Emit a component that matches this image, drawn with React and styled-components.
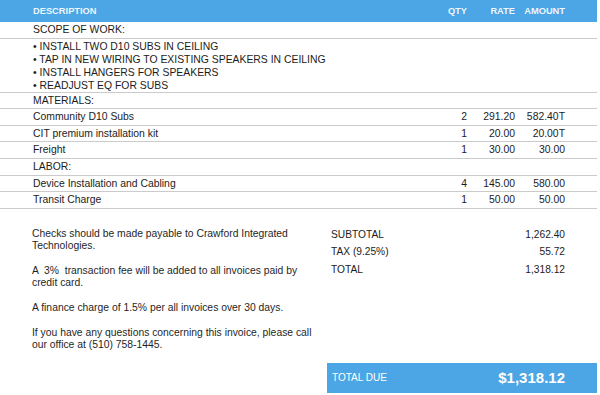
import styled, { createGlobalStyle } from 'styled-components';

const GlobalStyle = createGlobalStyle`
  html, body {
    margin: 0;
    padding: 0;
    background: #fff;
  }
  body {
    font-family: 'Liberation Sans', Arial, Helvetica, sans-serif;
    color: #1c1c1c;
  }
`;

const items = [
  { type: 'section', label: 'SCOPE OF WORK:' },
  {
    type: 'bullets',
    lines: [
      'INSTALL TWO D10 SUBS IN CEILING',
      'TAP IN NEW WIRING TO EXISTING SPEAKERS IN CEILING',
      'INSTALL HANGERS FOR SPEAKERS',
      'READJUST EQ FOR SUBS',
    ],
  },
  { type: 'section', label: 'MATERIALS:' },
  { type: 'item', label: 'Community D10 Subs', qty: '2', rate: '291.20', amount: '582.40T' },
  { type: 'item', label: 'CIT premium installation kit', qty: '1', rate: '20.00', amount: '20.00T' },
  { type: 'item', label: 'Freight', qty: '1', rate: '30.00', amount: '30.00' },
  { type: 'section', label: 'LABOR:' },
  { type: 'item', label: 'Device Installation and Cabling', qty: '4', rate: '145.00', amount: '580.00' },
  { type: 'item', label: 'Transit Charge', qty: '1', rate: '50.00', amount: '50.00' },
];

const totals = [
  { label: 'SUBTOTAL', value: '1,262.40' },
  { label: 'TAX (9.25%)', value: '55.72' },
  { label: 'TOTAL', value: '1,318.12' },
];

const App = () => {
  return (
    <>
      <GlobalStyle />
      <Page>
        <HeaderRow>
          <HeadCell>DESCRIPTION</HeadCell>
          <HeadCell $align='right'>QTY</HeadCell>
          <HeadCell $align='right'>RATE</HeadCell>
          <HeadCell $align='right'>AMOUNT</HeadCell>
        </HeaderRow>

        {items.map((item, index) => {
          if (item.type === 'bullets') {
            return (
              <BulletRow key={index}>
                {item.lines.map((line) => (
                  <Bullet key={line}>• {line}</Bullet>
                ))}
              </BulletRow>
            );
          }
          return (
            <Row key={index}>
              <Cell>{item.label}</Cell>
              <Cell $align='right'>{item.qty}</Cell>
              <Cell $align='right'>{item.rate}</Cell>
              <Cell $align='right'>{item.amount}</Cell>
            </Row>
          );
        })}

        <Footer>
          <Notes>
            <p>Checks should be made payable to Crawford Integrated Technologies.</p>
            <p>A &nbsp;3% &nbsp;transaction fee will be added to all invoices paid by credit card.</p>
            <p>A finance charge of 1.5% per all invoices over 30 days.</p>
            <p>If you have any questions concerning this invoice, please call our office at (510) 758-1445.</p>
          </Notes>
          <Totals>
            {totals.map((t) => (
              <TotalLine key={t.label}>
                <span>{t.label}</span>
                <span>{t.value}</span>
              </TotalLine>
            ))}
          </Totals>
          <DueBar>
            <DueLabel>TOTAL DUE</DueLabel>
            <DueAmount>$1,318.12</DueAmount>
          </DueBar>
        </Footer>
      </Page>
    </>
  );
};

export default App;

const Page = styled.div`
  width: 597px;
  height: 395px;
  overflow: hidden;
`;

// description | qty (ends 467) | rate (ends 515) | amount (ends 565)
const grid = `
  display: grid;
  grid-template-columns: 1fr 40px 48px 50px;
  padding: 0 32px 0 33px;
  align-items: center;
`;

const HeaderRow = styled.div`
  ${grid}
  height: 22px;
  background: #4ca5e4;
`;

const HeadCell = styled.div`
  font-size: 9.3px;
  font-weight: bold;
  color: rgba(255, 255, 255, 0.92);
  text-align: ${(props) => props.$align || 'left'};
  white-space: nowrap;
`;

const Row = styled.div`
  ${grid}
  height: 15.6px;
  border-bottom: 1px solid #cbcbcb;
`;

const Cell = styled.div`
  font-size: 10.4px;
  line-height: 15.6px;
  text-align: ${(props) => props.$align || 'left'};
  white-space: nowrap;
`;

const BulletRow = styled.div`
  padding: 1px 32px 0 33px;
  height: 52px;
  border-bottom: 1px solid #cbcbcb;
`;

const Bullet = styled.div`
  font-size: 10.4px;
  line-height: 13px;
`;

const Footer = styled.div`
  display: grid;
  grid-template-columns: 327px 270px;
  grid-template-rows: auto 30px;
  row-gap: 12px;
  padding-top: 17px;
`;

const Notes = styled.div`
  padding: 2px 8px 0 32px;
  font-size: 10.35px;
  line-height: 12px;
  color: #1f1f1f;

  p {
    margin: 0 0 13px;
  }
  p:last-child {
    margin-bottom: 0;
  }
`;

const Totals = styled.div`
  padding: 0 32px 0 4px;
`;

const TotalLine = styled.div`
  display: flex;
  justify-content: space-between;
  font-size: 10.2px;
  line-height: 17.5px;
`;

const DueBar = styled.div`
  grid-column: 2;
  display: flex;
  align-items: center;
  justify-content: space-between;
  padding: 0 32px 0 5px;
  background: #4ca5e4;
  color: #fff;
`;

const DueLabel = styled.span`
  font-size: 10px;
`;

const DueAmount = styled.span`
  font-size: 15px;
  font-weight: bold;
`;
